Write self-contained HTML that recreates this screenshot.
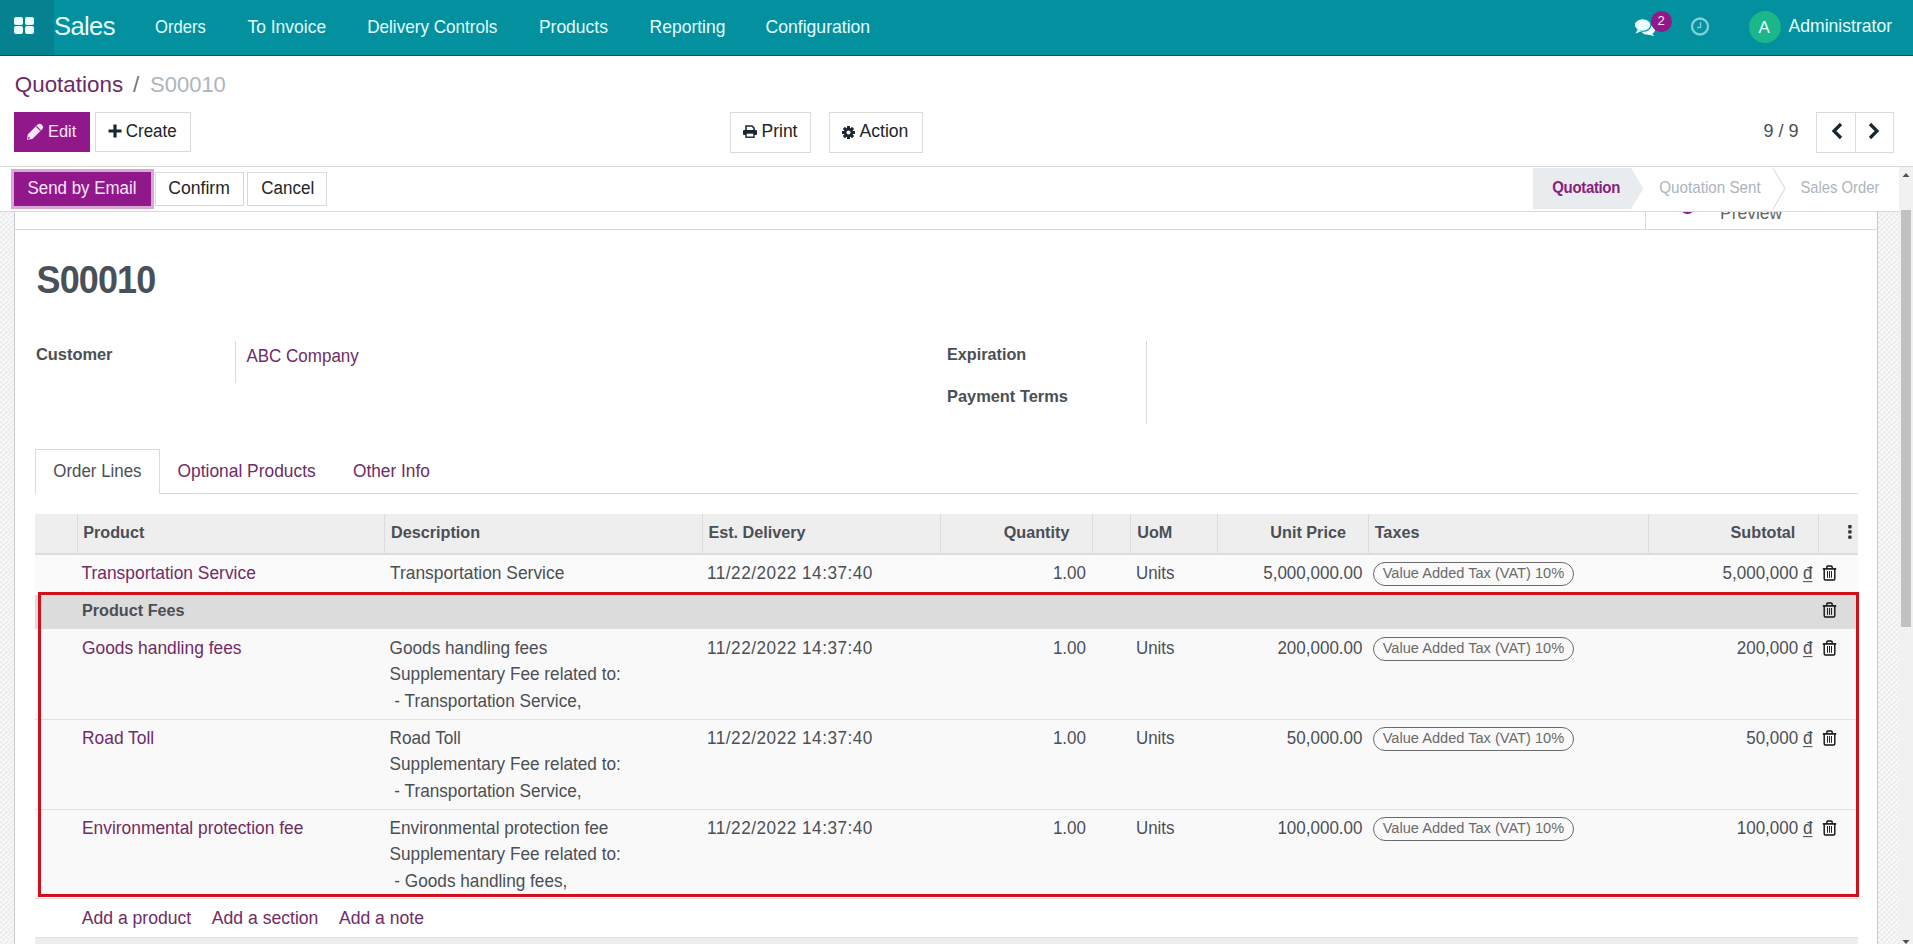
<!DOCTYPE html>
<html><head><meta charset="utf-8">
<style>
html,body{margin:0;padding:0;}
body{width:1913px;height:944px;overflow:hidden;position:relative;background:#fff;font-family:"Liberation Sans",sans-serif;}
.t{position:absolute;white-space:pre;}
.r{position:absolute;}
.tex{background-color:#ececec;background-image:linear-gradient(45deg,#fafafa 25%,transparent 25%,transparent 75%,#fafafa 75%),linear-gradient(45deg,#fafafa 25%,transparent 25%,transparent 75%,#fafafa 75%);background-size:5px 5px;background-position:0 0,2.5px 2.5px;}
u{text-decoration:underline;text-underline-offset:2px;}
</style></head><body>
<div class="r" style="left:0px;top:0px;width:1913px;height:56px;background:#03909f;"></div>
<div class="r" style="left:0px;top:0px;width:54px;height:55px;background:#05818f;"></div>
<div class="r" style="left:0px;top:55px;width:1913px;height:1px;background:#02535c;"></div>
<div class="r" style="left:14px;top:17px;width:9px;height:8px;background:#eaffff;border-radius:2px;"></div>
<div class="r" style="left:25px;top:17px;width:9px;height:8px;background:#eaffff;border-radius:2px;"></div>
<div class="r" style="left:14px;top:26px;width:9px;height:8px;background:#eaffff;border-radius:2px;"></div>
<div class="r" style="left:25px;top:26px;width:9px;height:8px;background:#eaffff;border-radius:2px;"></div>
<div class="t" style="top:9.70px;font-size:25.5px;line-height:33px;color:#eaffff;letter-spacing:-0.6px;left:54px;">Sales</div>
<div class="t" style="top:16.50px;font-size:16.6px;line-height:22px;color:#e4fdff;transform:scaleY(1.07);transform-origin:0 16.50px;left:155px;">Orders</div>
<div class="t" style="top:15.50px;font-size:17.5px;line-height:23px;color:#e4fdff;transform:scaleY(1.07);transform-origin:0 17.50px;left:247.4px;">To Invoice</div>
<div class="t" style="top:16.50px;font-size:17.1px;line-height:22px;color:#e4fdff;transform:scaleY(1.07);transform-origin:0 16.50px;left:367.2px;">Delivery Controls</div>
<div class="t" style="top:15.50px;font-size:17.5px;line-height:23px;color:#e4fdff;transform:scaleY(1.07);transform-origin:0 17.50px;left:538.9px;">Products</div>
<div class="t" style="top:15.50px;font-size:17.5px;line-height:23px;color:#e4fdff;transform:scaleY(1.07);transform-origin:0 17.50px;left:649.6px;">Reporting</div>
<div class="t" style="top:15.50px;font-size:17.6px;line-height:23px;color:#e4fdff;transform:scaleY(1.07);transform-origin:0 17.50px;left:765.5px;">Configuration</div>
<svg class="r" style="left:1633px;top:17px" width="24" height="20" viewBox="0 0 24 20">
<ellipse cx="15" cy="13" rx="7" ry="4.8" fill="#eaffff"/>
<path d="M18.5 16 L21.5 19.2 L15 17.5 Z" fill="#eaffff"/>
<ellipse cx="9.6" cy="8" rx="8.3" ry="6.3" fill="#eaffff" stroke="#03909f" stroke-width="1.1"/>
<path d="M4.5 12.5 L2.5 16.5 L9 14 Z" fill="#eaffff"/>
</svg>
<div class="r" style="left:1650.5px;top:10.5px;width:21px;height:21px;background:#90188a;border-radius:50%;"></div>
<div class="t" style="top:12.00px;font-size:13px;line-height:17px;color:#ffe6ff;left:1657.5px;">2</div>
<svg class="r" style="left:1690px;top:17px" width="20" height="20" viewBox="0 0 20 20">
<circle cx="10" cy="9.5" r="8" fill="none" stroke="#84cdd5" stroke-width="2.3"/>
<path d="M10.5 5 V10.5 H7" fill="none" stroke="#74cdd6" stroke-width="1.5"/>
</svg>
<div class="r" style="left:1748.7px;top:10.5px;width:32px;height:32px;background:#1bb689;border-radius:50%;"></div>
<div class="t" style="top:16.50px;font-size:17px;line-height:22px;color:#eaffff;left:1758.5px;">A</div>
<div class="t" style="top:15.10px;font-size:17.6px;line-height:23px;color:#e4fdff;transform:scaleY(1.04);transform-origin:0 17.50px;left:1788.5px;">Administrator</div>
<div class="t" style="top:70.00px;font-size:22.4px;line-height:29px;color:#6e2a66;left:14.8px;">Quotations</div>
<div class="t" style="top:70.00px;font-size:22.4px;line-height:29px;color:#6c757d;left:133px;">/</div>
<div class="t" style="top:70.00px;font-size:22px;line-height:29px;color:#adb5bd;left:150px;">S00010</div>
<div class="r" style="left:14px;top:112px;width:76px;height:40px;background:#90188a;"></div>
<svg class="r" style="left:26px;top:123px" width="18" height="18" viewBox="0 0 18 18">
<path d="M1 16.8 L1.8 11.4 L11.6 1.6 Q13.6 -0.2 15.5 1.6 L16.2 2.3 Q18 4.2 16.2 6.2 L6.4 16 Z" fill="#ffe6ff"/>
<path d="M10.3 3.3 L14.5 7.5" stroke="#90188a" stroke-width="1.1"/>
<path d="M2.2 15.6 L3.6 14.2" stroke="#90188a" stroke-width="1.3"/>
</svg>
<div class="t" style="top:121.30px;font-size:16.4px;line-height:21px;color:#ffe6ff;transform:scaleY(1.06);transform-origin:0 16.50px;left:48px;">Edit</div>
<div class="r" style="left:95px;top:112px;width:96px;height:40px;background:#fff;border:1px solid #dadada;box-sizing:border-box;"></div>
<svg class="r" style="left:108px;top:124px" width="14" height="14" viewBox="0 0 14 14">
<path d="M7 0.5 V13.5 M0.5 7 H13.5" stroke="#1c2630" stroke-width="3.2"/>
</svg>
<div class="t" style="top:121.30px;font-size:17px;line-height:22px;color:#212529;transform:scaleY(1.06);transform-origin:0 16.50px;left:125.7px;">Create</div>
<div class="r" style="left:730px;top:112px;width:81px;height:41px;background:#fff;border:1px solid #dadada;box-sizing:border-box;"></div>
<svg class="r" style="left:743px;top:125px" width="14" height="13" viewBox="0 0 14 13">
<path d="M3 5 V1 H9 L11 3 V5" fill="none" stroke="#1c2630" stroke-width="1.6"/>
<rect x="0" y="5" width="14" height="5" rx="1" fill="#1c2630"/>
<rect x="3" y="8" width="8" height="4.2" fill="#fff" stroke="#1c2630" stroke-width="1.4"/>
</svg>
<div class="t" style="top:120.20px;font-size:17.5px;line-height:23px;color:#212529;transform:scaleY(1.06);transform-origin:0 17.50px;left:761.5px;">Print</div>
<div class="r" style="left:829px;top:112px;width:94px;height:41px;background:#fff;border:1px solid #dadada;box-sizing:border-box;"></div>
<svg class="r" style="left:842px;top:126px" width="13" height="13" viewBox="0 0 13 13">
<g fill="#1c2630"><circle cx="6.5" cy="6.5" r="4.6"/>
<rect x="5" y="0" width="3" height="13"/><rect x="0" y="5" width="13" height="3"/>
<rect x="5" y="0" width="3" height="13" transform="rotate(45 6.5 6.5)"/><rect x="5" y="0" width="3" height="13" transform="rotate(-45 6.5 6.5)"/></g>
<circle cx="6.5" cy="6.5" r="2" fill="#fff"/>
</svg>
<div class="t" style="top:120.20px;font-size:17.6px;line-height:23px;color:#212529;transform:scaleY(1.06);transform-origin:0 17.50px;left:859.5px;">Action</div>
<div class="t" style="top:119.50px;font-size:18px;line-height:23px;color:#495057;left:1763.4px;">9 / 9</div>
<div class="r" style="left:1816px;top:112px;width:78px;height:41px;background:#fff;border:1px solid #dadada;box-sizing:border-box;"></div>
<div class="r" style="left:1855px;top:112px;width:1px;height:41px;background:#dadada;"></div>
<svg class="r" style="left:1830px;top:122px" width="14" height="18" viewBox="0 0 14 18">
<path d="M11 2 L4 9 L11 16" fill="none" stroke="#1c2630" stroke-width="3.2"/></svg>
<svg class="r" style="left:1867px;top:122px" width="14" height="18" viewBox="0 0 14 18">
<path d="M3 2 L10 9 L3 16" fill="none" stroke="#1c2630" stroke-width="3.2"/></svg>
<div class="r" style="left:0px;top:166px;width:1913px;height:1px;background:#dadada;"></div>
<div class="r tex" style="left:0;top:211px;width:14px;height:733px;"></div>
<div class="r tex" style="left:1878px;top:211px;width:21px;height:733px;"></div>
<div class="r" style="left:14px;top:211px;width:1864px;height:733px;background:#fff;border-left:1px solid #c9c9cd;border-right:1px solid #c9c9cd;box-sizing:border-box;"></div>
<div class="r" style="left:14px;top:229px;width:1864px;height:1px;background:#dadada;"></div>
<div class="r" style="left:1645px;top:211px;width:1px;height:18px;background:#dadada;"></div>
<div class="r" style="left:1645px;top:211px;width:233px;height:18px;overflow:hidden;"><div style="position:absolute;left:35px;top:-12px;width:15px;height:15px;border-radius:50%;background:#90188a;"></div><div style="position:absolute;left:75px;top:-9px;font-size:17.5px;line-height:22px;color:#666;">Preview</div></div>
<div class="t" style="top:257.00px;font-size:36px;line-height:47px;color:#495057;transform:scaleY(1.06);transform-origin:0 36.00px;font-weight:700;letter-spacing:-0.9px;left:36.6px;">S00010</div>
<div class="t" style="top:343.50px;font-size:16.4px;line-height:21px;color:#4a4f55;transform:scaleY(1.06);transform-origin:0 16.50px;font-weight:700;left:36px;">Customer</div>
<div class="r" style="left:235px;top:341px;width:1px;height:42px;background:#dadada;"></div>
<div class="t" style="top:345.50px;font-size:17px;line-height:22px;color:#6f2c67;transform:scaleY(1.06);transform-origin:0 16.50px;left:246.4px;">ABC Company</div>
<div class="t" style="top:343.50px;font-size:16.2px;line-height:21px;color:#4a4f55;transform:scaleY(1.06);transform-origin:0 16.50px;font-weight:700;left:947px;">Expiration</div>
<div class="t" style="top:385.50px;font-size:16.4px;line-height:21px;color:#4a4f55;transform:scaleY(1.06);transform-origin:0 16.50px;font-weight:700;left:947px;">Payment Terms</div>
<div class="r" style="left:1146px;top:341px;width:1px;height:83px;background:#dadada;"></div>
<div class="r" style="left:35px;top:493px;width:1823px;height:1px;background:#dadada;"></div>
<div class="r" style="left:35px;top:449px;width:125px;height:45px;background:#fff;border:1px solid #dadada;border-bottom:none;box-sizing:border-box;"></div>
<div class="t" style="top:460.50px;font-size:16.9px;line-height:22px;color:#495057;transform:scaleY(1.06);transform-origin:0 16.50px;left:53.3px;">Order Lines</div>
<div class="t" style="top:459.50px;font-size:17.4px;line-height:23px;color:#6f2c67;transform:scaleY(1.06);transform-origin:0 17.50px;left:177.5px;">Optional Products</div>
<div class="t" style="top:460.00px;font-size:17.3px;line-height:22px;color:#6f2c67;transform:scaleY(1.06);transform-origin:0 17.00px;left:353px;">Other Info</div>
<div class="r" style="left:35px;top:514px;width:1823px;height:39px;background:#eeeeee;"></div>
<div class="r" style="left:35px;top:553px;width:1823px;height:2px;background:#dadcde;"></div>
<div class="r" style="left:77px;top:514px;width:1px;height:39px;background:#dcdcdc;"></div>
<div class="r" style="left:384px;top:514px;width:1px;height:39px;background:#dcdcdc;"></div>
<div class="r" style="left:702px;top:514px;width:1px;height:39px;background:#dcdcdc;"></div>
<div class="r" style="left:940px;top:514px;width:1px;height:39px;background:#dcdcdc;"></div>
<div class="r" style="left:1092px;top:514px;width:1px;height:39px;background:#dcdcdc;"></div>
<div class="r" style="left:1130px;top:514px;width:1px;height:39px;background:#dcdcdc;"></div>
<div class="r" style="left:1217px;top:514px;width:1px;height:39px;background:#dcdcdc;"></div>
<div class="r" style="left:1368px;top:514px;width:1px;height:39px;background:#dcdcdc;"></div>
<div class="r" style="left:1648px;top:514px;width:1px;height:39px;background:#dcdcdc;"></div>
<div class="r" style="left:1818px;top:514px;width:1px;height:39px;background:#dcdcdc;"></div>
<div class="t" style="top:522.10px;font-size:16.2px;line-height:21px;color:#4a4f55;transform:scaleY(1.06);transform-origin:0 16.50px;font-weight:700;left:83.2px;">Product</div>
<div class="t" style="top:522.10px;font-size:16.2px;line-height:21px;color:#4a4f55;transform:scaleY(1.06);transform-origin:0 16.50px;font-weight:700;left:391px;">Description</div>
<div class="t" style="top:522.10px;font-size:16.2px;line-height:21px;color:#4a4f55;transform:scaleY(1.06);transform-origin:0 16.50px;font-weight:700;left:708.4px;">Est. Delivery</div>
<div class="t" style="top:522.10px;font-size:16.2px;line-height:21px;color:#4a4f55;transform:scaleY(1.06);transform-origin:0 16.50px;font-weight:700;right:843.5999999999999px;text-align:right;">Quantity</div>
<div class="t" style="top:522.10px;font-size:16.2px;line-height:21px;color:#4a4f55;transform:scaleY(1.06);transform-origin:0 16.50px;font-weight:700;left:1137.2px;">UoM</div>
<div class="t" style="top:522.10px;font-size:16.2px;line-height:21px;color:#4a4f55;transform:scaleY(1.06);transform-origin:0 16.50px;font-weight:700;right:567.0999999999999px;text-align:right;">Unit Price</div>
<div class="t" style="top:522.10px;font-size:16.2px;line-height:21px;color:#4a4f55;transform:scaleY(1.06);transform-origin:0 16.50px;font-weight:700;left:1374.7px;">Taxes</div>
<div class="t" style="top:522.10px;font-size:16.2px;line-height:21px;color:#4a4f55;transform:scaleY(1.06);transform-origin:0 16.50px;font-weight:700;right:117.70000000000005px;text-align:right;">Subtotal</div>
<svg class="r" style="left:1847px;top:524px" width="6" height="16" viewBox="0 0 6 16"><g fill="#2f353b"><rect x="1.2" y="1" width="3.4" height="3.4" rx="0.6"/><rect x="1.2" y="6.2" width="3.4" height="3.4" rx="0.6"/><rect x="1.2" y="11.4" width="3.4" height="3.4" rx="0.6"/></g></svg>
<div class="r" style="left:35px;top:555px;width:1823px;height:37px;background:#fafafa;"></div>
<div class="t" style="top:561.50px;font-size:17.4px;line-height:23px;color:#6f2c67;transform:scaleY(1.06);transform-origin:0 17.50px;left:81.5px;">Transportation Service</div>
<div class="t" style="top:561.50px;font-size:17.4px;line-height:23px;color:#4a4f55;transform:scaleY(1.06);transform-origin:0 17.50px;left:390px;">Transportation Service</div>
<div class="t" style="top:562.00px;font-size:17.2px;line-height:22px;color:#4a4f55;transform:scaleY(1.06);transform-origin:0 17.00px;letter-spacing:0.5px;left:707px;">11/22/2022 14:37:40</div>
<div class="t" style="top:562.50px;font-size:17px;line-height:22px;color:#4a4f55;transform:scaleY(1.06);transform-origin:0 16.50px;right:827px;text-align:right;">1.00</div>
<div class="t" style="top:562.50px;font-size:16.9px;line-height:22px;color:#4a4f55;transform:scaleY(1.06);transform-origin:0 16.50px;left:1136px;">Units</div>
<div class="t" style="top:562.50px;font-size:17px;line-height:22px;color:#4a4f55;transform:scaleY(1.06);transform-origin:0 16.50px;right:550.5px;text-align:right;">5,000,000.00</div>
<div class="r" style="left:1373px;top:562px;width:201px;height:24px;border:1.3px solid #6b6b6b;border-radius:12px;box-sizing:border-box;"></div>
<div class="t" style="top:564.00px;font-size:14.6px;line-height:19px;color:#6b6b6b;transform:scaleY(1.06);transform-origin:0 14.50px;left:1382.7px;">Value Added Tax (VAT) 10%</div>
<div class="t" style="top:562.50px;font-size:17px;line-height:22px;color:#4a4f55;transform:scaleY(1.06);transform-origin:0 16.50px;right:100.59999999999991px;text-align:right;">5,000,000 <u>đ</u></div>
<svg class="r" style="left:1822px;top:565px" width="15" height="16" viewBox="0 0 15 16">
<path d="M4.8 3.6 V2.3 Q4.8 1 6 1 H9 Q10.2 1 10.2 2.3 V3.6" fill="none" stroke="#111" stroke-width="1.4"/>
<path d="M0.8 3.9 H14.2" stroke="#111" stroke-width="1.6"/>
<path d="M2.2 4 V13.8 Q2.2 15 3.4 15 H11.6 Q12.8 15 12.8 13.8 V4" fill="none" stroke="#111" stroke-width="1.4"/>
<path d="M5.5 6 V12.8 M7.5 6 V12.8 M9.5 6 V12.8" stroke="#222" stroke-width="1"/>
</svg>
<div class="r" style="left:35px;top:595px;width:1823px;height:34px;background:#dcdcdd;"></div>
<div class="t" style="top:599.80px;font-size:16.2px;line-height:21px;color:#4a4f55;transform:scaleY(1.06);transform-origin:0 16.50px;font-weight:700;left:82px;">Product Fees</div>
<svg class="r" style="left:1822px;top:601.5px" width="15" height="16" viewBox="0 0 15 16">
<path d="M4.8 3.6 V2.3 Q4.8 1 6 1 H9 Q10.2 1 10.2 2.3 V3.6" fill="none" stroke="#111" stroke-width="1.4"/>
<path d="M0.8 3.9 H14.2" stroke="#111" stroke-width="1.6"/>
<path d="M2.2 4 V13.8 Q2.2 15 3.4 15 H11.6 Q12.8 15 12.8 13.8 V4" fill="none" stroke="#111" stroke-width="1.4"/>
<path d="M5.5 6 V12.8 M7.5 6 V12.8 M9.5 6 V12.8" stroke="#222" stroke-width="1"/>
</svg>
<div class="r" style="left:35px;top:629px;width:1823px;height:90px;background:#faf9fa;"></div>
<div class="r" style="left:35px;top:719px;width:1823px;height:1px;background:#dee2e6;"></div>
<div class="t" style="top:636.50px;font-size:17.4px;line-height:23px;color:#6f2c67;transform:scaleY(1.06);transform-origin:0 17.50px;left:82px;">Goods handling fees</div>
<div class="t" style="top:637.00px;font-size:17.2px;line-height:22px;color:#4a4f55;transform:scaleY(1.06);transform-origin:0 17.00px;left:389.6px;">Goods handling fees</div>
<div class="t" style="top:663.30px;font-size:17.2px;line-height:22px;color:#4a4f55;transform:scaleY(1.06);transform-origin:0 17.00px;left:389.6px;">Supplementary Fee related to:</div>
<div class="t" style="top:689.60px;font-size:17.2px;line-height:22px;color:#4a4f55;transform:scaleY(1.06);transform-origin:0 17.00px;left:389.6px;">&nbsp;- Transportation Service,</div>
<div class="t" style="top:637.00px;font-size:17.2px;line-height:22px;color:#4a4f55;transform:scaleY(1.06);transform-origin:0 17.00px;letter-spacing:0.5px;left:707px;">11/22/2022 14:37:40</div>
<div class="t" style="top:637.50px;font-size:17px;line-height:22px;color:#4a4f55;transform:scaleY(1.06);transform-origin:0 16.50px;right:827px;text-align:right;">1.00</div>
<div class="t" style="top:637.50px;font-size:16.9px;line-height:22px;color:#4a4f55;transform:scaleY(1.06);transform-origin:0 16.50px;left:1136px;">Units</div>
<div class="t" style="top:637.50px;font-size:17px;line-height:22px;color:#4a4f55;transform:scaleY(1.06);transform-origin:0 16.50px;right:550.5px;text-align:right;">200,000.00</div>
<div class="r" style="left:1373px;top:637px;width:201px;height:24px;border:1.3px solid #6b6b6b;border-radius:12px;box-sizing:border-box;"></div>
<div class="t" style="top:639.00px;font-size:14.6px;line-height:19px;color:#6b6b6b;transform:scaleY(1.06);transform-origin:0 14.50px;left:1382.7px;">Value Added Tax (VAT) 10%</div>
<div class="t" style="top:637.50px;font-size:17px;line-height:22px;color:#4a4f55;transform:scaleY(1.06);transform-origin:0 16.50px;right:100.59999999999991px;text-align:right;">200,000 <u>đ</u></div>
<svg class="r" style="left:1822px;top:640px" width="15" height="16" viewBox="0 0 15 16">
<path d="M4.8 3.6 V2.3 Q4.8 1 6 1 H9 Q10.2 1 10.2 2.3 V3.6" fill="none" stroke="#111" stroke-width="1.4"/>
<path d="M0.8 3.9 H14.2" stroke="#111" stroke-width="1.6"/>
<path d="M2.2 4 V13.8 Q2.2 15 3.4 15 H11.6 Q12.8 15 12.8 13.8 V4" fill="none" stroke="#111" stroke-width="1.4"/>
<path d="M5.5 6 V12.8 M7.5 6 V12.8 M9.5 6 V12.8" stroke="#222" stroke-width="1"/>
</svg>
<div class="r" style="left:35px;top:720px;width:1823px;height:89px;background:#faf9fa;"></div>
<div class="r" style="left:35px;top:809px;width:1823px;height:1px;background:#dee2e6;"></div>
<div class="t" style="top:726.50px;font-size:17.4px;line-height:23px;color:#6f2c67;transform:scaleY(1.06);transform-origin:0 17.50px;left:82px;">Road Toll</div>
<div class="t" style="top:727.00px;font-size:17.2px;line-height:22px;color:#4a4f55;transform:scaleY(1.06);transform-origin:0 17.00px;left:389.6px;">Road Toll</div>
<div class="t" style="top:753.30px;font-size:17.2px;line-height:22px;color:#4a4f55;transform:scaleY(1.06);transform-origin:0 17.00px;left:389.6px;">Supplementary Fee related to:</div>
<div class="t" style="top:779.60px;font-size:17.2px;line-height:22px;color:#4a4f55;transform:scaleY(1.06);transform-origin:0 17.00px;left:389.6px;">&nbsp;- Transportation Service,</div>
<div class="t" style="top:727.00px;font-size:17.2px;line-height:22px;color:#4a4f55;transform:scaleY(1.06);transform-origin:0 17.00px;letter-spacing:0.5px;left:707px;">11/22/2022 14:37:40</div>
<div class="t" style="top:727.50px;font-size:17px;line-height:22px;color:#4a4f55;transform:scaleY(1.06);transform-origin:0 16.50px;right:827px;text-align:right;">1.00</div>
<div class="t" style="top:727.50px;font-size:16.9px;line-height:22px;color:#4a4f55;transform:scaleY(1.06);transform-origin:0 16.50px;left:1136px;">Units</div>
<div class="t" style="top:727.50px;font-size:17px;line-height:22px;color:#4a4f55;transform:scaleY(1.06);transform-origin:0 16.50px;right:550.5px;text-align:right;">50,000.00</div>
<div class="r" style="left:1373px;top:727px;width:201px;height:24px;border:1.3px solid #6b6b6b;border-radius:12px;box-sizing:border-box;"></div>
<div class="t" style="top:729.00px;font-size:14.6px;line-height:19px;color:#6b6b6b;transform:scaleY(1.06);transform-origin:0 14.50px;left:1382.7px;">Value Added Tax (VAT) 10%</div>
<div class="t" style="top:727.50px;font-size:17px;line-height:22px;color:#4a4f55;transform:scaleY(1.06);transform-origin:0 16.50px;right:100.59999999999991px;text-align:right;">50,000 <u>đ</u></div>
<svg class="r" style="left:1822px;top:730px" width="15" height="16" viewBox="0 0 15 16">
<path d="M4.8 3.6 V2.3 Q4.8 1 6 1 H9 Q10.2 1 10.2 2.3 V3.6" fill="none" stroke="#111" stroke-width="1.4"/>
<path d="M0.8 3.9 H14.2" stroke="#111" stroke-width="1.6"/>
<path d="M2.2 4 V13.8 Q2.2 15 3.4 15 H11.6 Q12.8 15 12.8 13.8 V4" fill="none" stroke="#111" stroke-width="1.4"/>
<path d="M5.5 6 V12.8 M7.5 6 V12.8 M9.5 6 V12.8" stroke="#222" stroke-width="1"/>
</svg>
<div class="r" style="left:35px;top:810px;width:1823px;height:87px;background:#faf9fa;"></div>
<div class="t" style="top:816.50px;font-size:17.4px;line-height:23px;color:#6f2c67;transform:scaleY(1.06);transform-origin:0 17.50px;left:82px;">Environmental protection fee</div>
<div class="t" style="top:817.00px;font-size:17.2px;line-height:22px;color:#4a4f55;transform:scaleY(1.06);transform-origin:0 17.00px;left:389.6px;">Environmental protection fee</div>
<div class="t" style="top:843.30px;font-size:17.2px;line-height:22px;color:#4a4f55;transform:scaleY(1.06);transform-origin:0 17.00px;left:389.6px;">Supplementary Fee related to:</div>
<div class="t" style="top:869.60px;font-size:17.2px;line-height:22px;color:#4a4f55;transform:scaleY(1.06);transform-origin:0 17.00px;left:389.6px;">&nbsp;- Goods handling fees,</div>
<div class="t" style="top:817.00px;font-size:17.2px;line-height:22px;color:#4a4f55;transform:scaleY(1.06);transform-origin:0 17.00px;letter-spacing:0.5px;left:707px;">11/22/2022 14:37:40</div>
<div class="t" style="top:817.50px;font-size:17px;line-height:22px;color:#4a4f55;transform:scaleY(1.06);transform-origin:0 16.50px;right:827px;text-align:right;">1.00</div>
<div class="t" style="top:817.50px;font-size:16.9px;line-height:22px;color:#4a4f55;transform:scaleY(1.06);transform-origin:0 16.50px;left:1136px;">Units</div>
<div class="t" style="top:817.50px;font-size:17px;line-height:22px;color:#4a4f55;transform:scaleY(1.06);transform-origin:0 16.50px;right:550.5px;text-align:right;">100,000.00</div>
<div class="r" style="left:1373px;top:817px;width:201px;height:24px;border:1.3px solid #6b6b6b;border-radius:12px;box-sizing:border-box;"></div>
<div class="t" style="top:819.00px;font-size:14.6px;line-height:19px;color:#6b6b6b;transform:scaleY(1.06);transform-origin:0 14.50px;left:1382.7px;">Value Added Tax (VAT) 10%</div>
<div class="t" style="top:817.50px;font-size:17px;line-height:22px;color:#4a4f55;transform:scaleY(1.06);transform-origin:0 16.50px;right:100.59999999999991px;text-align:right;">100,000 <u>đ</u></div>
<svg class="r" style="left:1822px;top:820px" width="15" height="16" viewBox="0 0 15 16">
<path d="M4.8 3.6 V2.3 Q4.8 1 6 1 H9 Q10.2 1 10.2 2.3 V3.6" fill="none" stroke="#111" stroke-width="1.4"/>
<path d="M0.8 3.9 H14.2" stroke="#111" stroke-width="1.6"/>
<path d="M2.2 4 V13.8 Q2.2 15 3.4 15 H11.6 Q12.8 15 12.8 13.8 V4" fill="none" stroke="#111" stroke-width="1.4"/>
<path d="M5.5 6 V12.8 M7.5 6 V12.8 M9.5 6 V12.8" stroke="#222" stroke-width="1"/>
</svg>
<div class="t" style="top:907.20px;font-size:17.6px;line-height:23px;color:#6f2c67;transform:scaleY(1.06);transform-origin:0 17.50px;left:81.7px;">Add a product</div>
<div class="t" style="top:907.20px;font-size:17.6px;line-height:23px;color:#6f2c67;transform:scaleY(1.06);transform-origin:0 17.50px;left:211.8px;">Add a section</div>
<div class="t" style="top:907.20px;font-size:17.6px;line-height:23px;color:#6f2c67;transform:scaleY(1.06);transform-origin:0 17.50px;left:338.9px;">Add a note</div>
<div class="r" style="left:35px;top:898px;width:1823px;height:1px;background:#dddddd;"></div>
<div class="r" style="left:35px;top:937px;width:1823px;height:7px;background:#eeeeee;border-top:1px solid #e2e2e2;box-sizing:border-box;"></div>
<div class="r" style="left:38px;top:592px;width:1821px;height:305px;border:3px solid #d0101b;box-sizing:border-box;"></div>
<div class="r" style="left:0px;top:167px;width:1899px;height:44px;background:#fff;"></div>
<div class="r" style="left:0px;top:211px;width:1899px;height:1px;background:#dadada;"></div>
<div class="r" style="left:11px;top:169px;width:143px;height:40px;background:#d9a6d8;"></div>
<div class="r" style="left:14px;top:172px;width:137px;height:34px;background:#90188a;"></div>
<div class="t" style="top:177.80px;font-size:16.9px;line-height:22px;color:#ffe6ff;transform:scaleY(1.06);transform-origin:0 16.50px;left:27.5px;">Send by Email</div>
<div class="r" style="left:154.6px;top:172px;width:89px;height:34px;background:#fff;border:1px solid #dadada;box-sizing:border-box;"></div>
<div class="t" style="top:176.80px;font-size:17.6px;line-height:23px;color:#212529;transform:scaleY(1.06);transform-origin:0 17.50px;left:168.3px;">Confirm</div>
<div class="r" style="left:247.4px;top:172px;width:80px;height:34px;background:#fff;border:1px solid #dadada;box-sizing:border-box;"></div>
<div class="t" style="top:177.80px;font-size:17px;line-height:22px;color:#212529;transform:scaleY(1.06);transform-origin:0 16.50px;left:261.3px;">Cancel</div>
<svg class="r" style="left:1533px;top:168px" width="112" height="42" viewBox="0 0 112 42"><path d="M0 0 H98 L110.5 20.5 L98 41 H0 Z" fill="#e9ecef"/></svg>
<div class="t" style="top:178.40px;font-size:15px;line-height:20px;color:#88207f;transform:scaleY(1.06);transform-origin:0 15.50px;font-weight:700;letter-spacing:-0.35px;left:1552.3px;">Quotation</div>
<div class="t" style="top:178.40px;font-size:15.2px;line-height:20px;color:#adb5bd;transform:scaleY(1.06);transform-origin:0 15.50px;left:1659.3px;">Quotation Sent</div>
<svg class="r" style="left:1770px;top:167px" width="20" height="44" viewBox="0 0 20 44"><path d="M3 1 L15 21.5 L3 42" fill="none" stroke="#dee2e6" stroke-width="1.3"/></svg>
<div class="t" style="top:179.40px;font-size:14.8px;line-height:19px;color:#adb5bd;transform:scaleY(1.06);transform-origin:0 14.50px;left:1800.4px;">Sales Order</div>
<div class="r" style="left:1899px;top:167px;width:14px;height:777px;background:#f1f1f1;"></div>
<div class="r" style="left:1901px;top:210px;width:10px;height:417px;background:#c1c1c1;"></div>
<svg class="r" style="left:1899px;top:170px" width="14" height="10" viewBox="0 0 14 10"><path d="M3.5 7 L7 3 L10.5 7 Z" fill="#505050"/></svg>
<svg class="r" style="left:1899px;top:936px" width="14" height="10" viewBox="0 0 14 10"><path d="M3.5 4 L7 8 L10.5 4 Z" fill="#505050"/></svg>
</body></html>
